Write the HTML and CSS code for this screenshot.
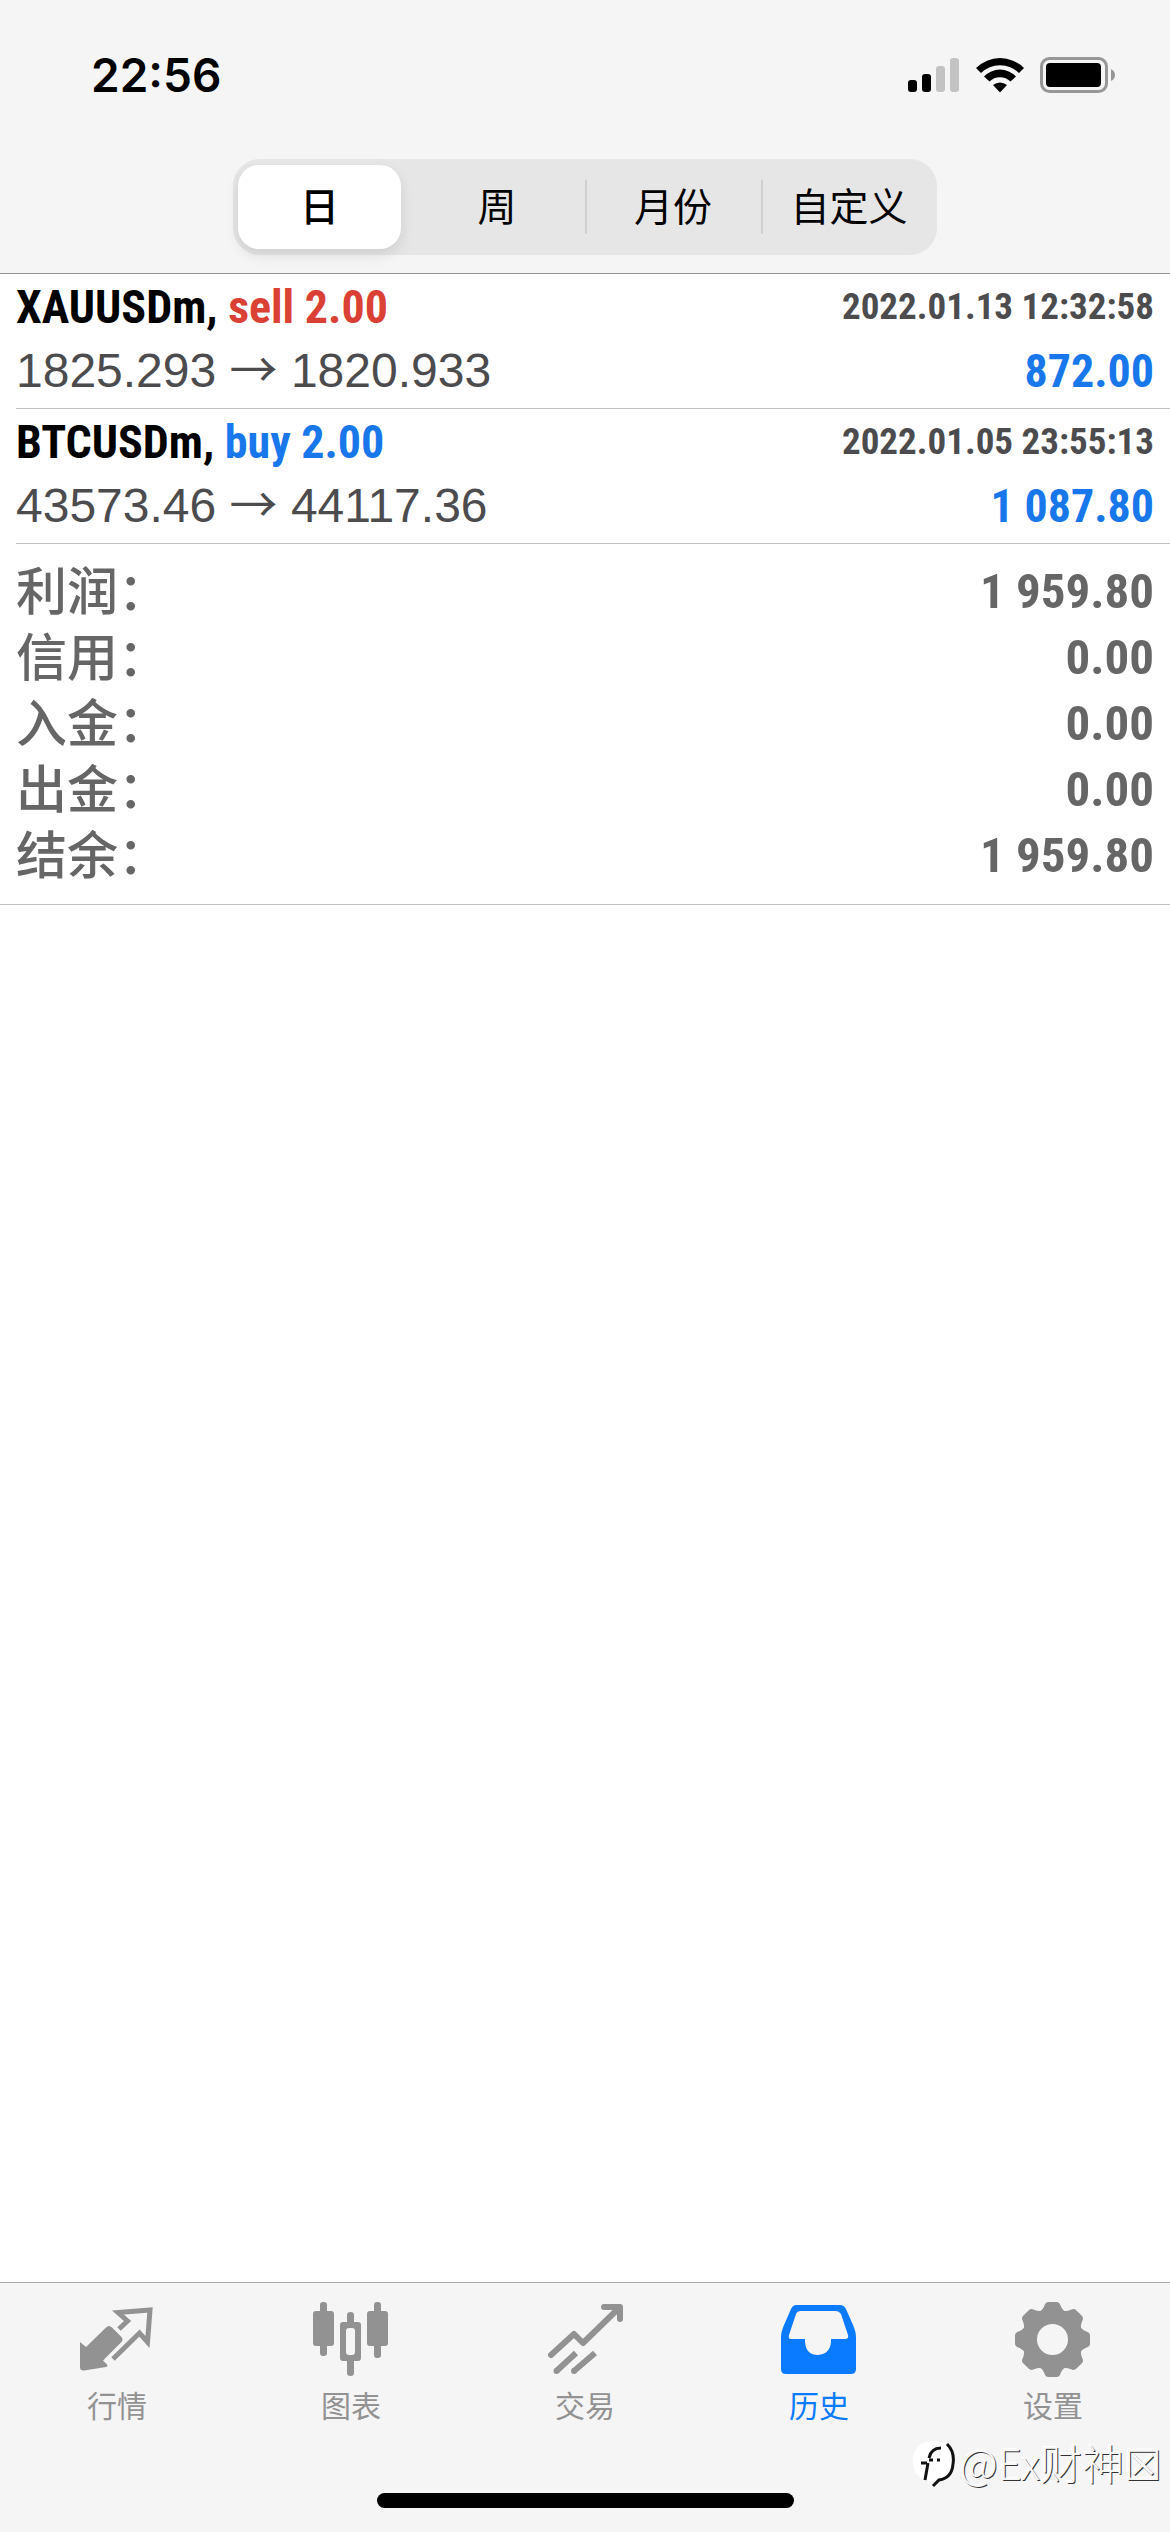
FILE: index.html
```html
<!DOCTYPE html>
<html lang="zh-CN">
<head>
  <meta charset="UTF-8">
  <meta name="viewport" content="width=device-width, initial-scale=1.0">
  <title>历史</title>
  <link rel="stylesheet" href="styles.css">
</head>
<body>
  <header class="header">
    <div class="status-bar">
      <span class="clock">22:56</span>
      <div class="status-icons">
        <svg class="icon-signal" width="52" height="36" viewBox="0 0 52 36">
          <rect x="0" y="23" width="9" height="12" rx="3"/>
          <rect x="14" y="17" width="9" height="18" rx="3"/>
          <rect class="faint" x="28" y="9" width="9" height="26" rx="3"/>
          <rect class="faint" x="42" y="1" width="9" height="34" rx="3"/>
        </svg>
        <svg class="icon-wifi" width="50" height="38" viewBox="0 0 50 38">
          <path d="M1 12 A34 34 0 0 1 49 12 L44 17 A27 27 0 0 0 6 17 Z"/>
          <path d="M9 20.500 A22 22 0 0 1 41 20.500 L35.500 25.500 A15 15 0 0 0 14.500 25.500 Z"/>
          <path d="M18 29 A11 11 0 0 1 32 29 L25 36.500 Z"/>
        </svg>
        <svg class="icon-battery" width="76" height="36" viewBox="0 0 76 36">
          <rect class="shell" x="1.500" y="1.500" width="65" height="33" rx="8"/>
          <rect x="6" y="6" width="55" height="24" rx="4"/>
          <path class="cap" d="M71 12 Q75 14 75 18 Q75 22 71 24 Z"/>
        </svg>
      </div>
    </div>
    <div class="segments">
      <button class="segment active" type="button">日</button>
      <button class="segment" type="button">周</button>
      <button class="segment divided" type="button">月份</button>
      <button class="segment divided" type="button">自定义</button>
    </div>
  </header>

  <main class="history">
    <ul class="deals">
      <li class="deal">
        <div class="deal-line">
          <span class="symbol">XAUUSDm, <span class="sell">sell 2.00</span></span>
          <time class="date">2022.01.13 12:32:58</time>
        </div>
        <div class="deal-line">
          <span class="prices">1825.293 <span class="arrow">→</span> 1820.933</span>
          <span class="profit">872.00</span>
        </div>
      </li>
      <li class="deal">
        <div class="deal-line">
          <span class="symbol">BTCUSDm, <span class="buy">buy 2.00</span></span>
          <time class="date">2022.01.05 23:55:13</time>
        </div>
        <div class="deal-line">
          <span class="prices">43573.46 <span class="arrow">→</span> 44117.36</span>
          <span class="profit">1 087.80</span>
        </div>
      </li>
    </ul>

    <dl class="summary">
      <div class="summary-row"><dt>利润：</dt><dd>1 959.80</dd></div>
      <div class="summary-row"><dt>信用：</dt><dd>0.00</dd></div>
      <div class="summary-row"><dt>入金：</dt><dd>0.00</dd></div>
      <div class="summary-row"><dt>出金：</dt><dd>0.00</dd></div>
      <div class="summary-row"><dt>结余：</dt><dd>1 959.80</dd></div>
    </dl>
  </main>

  <footer class="footer">
    <nav class="tabs">
      <a class="tab" href="#quotes">
        <svg class="tab-icon" width="80" height="80" viewBox="0 0 80 80">
          <path d="M3 41 L9 46 L29 26.500 Q32 23.500 35 26.500 L44.500 36 Q46.500 38.500 44.500 41 L26 59.500 L30 63.500 Q31 65.500 29 66 L7 69.500 Q3 70 3 66 Z"/>
          <path class="outline" d="M42 28 L50.500 20 L41 11.500 L73 9 L70.500 41 L62.500 32 L36 58"/>
        </svg>
        <span>行情</span>
      </a>
      <a class="tab" href="#charts">
        <svg class="tab-icon" width="80" height="80" viewBox="0 0 80 80">
          <rect x="2" y="10" width="21" height="35" rx="3"/>
          <rect x="9" y="1" width="7" height="54" rx="3"/>
          <rect x="56" y="10" width="21" height="35" rx="3"/>
          <rect x="63" y="1" width="7" height="56" rx="3"/>
          <path fill-rule="evenodd" d="M36 21 V14 Q36 11 39.500 11 Q43 11 43 14 V21 H47 Q50 21 50 24 V57 Q50 60 47 60 H43 V72 Q43 75 39.500 75 Q36 75 36 72 V60 H32 Q29 60 29 57 V24 Q29 21 32 21 Z M38 27 Q35 27 35 30 V51 Q35 54 38 54 H41 Q44 54 44 51 V30 Q44 27 41 27 Z"/>
        </svg>
        <span>图表</span>
      </a>
      <a class="tab" href="#trade">
        <svg class="tab-icon" width="80" height="80" viewBox="0 0 80 80">
          <path class="trend" d="M6 54 L29 33 L38 42 L73 8 M59 6 H75 V18"/>
          <path class="trend cut" d="M11.500 70 L31 52 M29 70 L50 52"/>
          <circle cx="11.500" cy="70" r="3"/>
          <circle cx="29" cy="70" r="3"/>
        </svg>
        <span>交易</span>
      </a>
      <a class="tab active" href="#history">
        <svg class="tab-icon" width="80" height="80" viewBox="0 0 80 80">
          <path fill-rule="evenodd" d="M17 4 H61 Q65 4 67 8 L74 24 Q77 31 77 36 V68 Q77 73 72 73 H7 Q2 73 2 68 V36 Q2 31 5 24 L12 8 Q14 4 17 4 Z M22 10 Q18 10 17 13 L10 34 Q9 38 12 38 H26 V41 Q27 54 39 54 Q51 53 52 41 V38 H66 Q70 38 69 34 L62 13 Q60 10 57 10 Z"/>
        </svg>
        <span>历史</span>
      </a>
      <a class="tab" href="#settings">
        <svg class="tab-icon" width="80" height="80" viewBox="0 0 80 80">
          <g transform="translate(39.500 38.500)">
            <path id="tooth" d="M-14 -27 Q-10 -29 -8 -34 Q-7 -37.500 -4 -37.500 H4 Q7 -37.500 8 -34 Q10 -29 14 -27 Z"/>
            <use href="#tooth" transform="rotate(45)"/>
            <use href="#tooth" transform="rotate(90)"/>
            <use href="#tooth" transform="rotate(135)"/>
            <use href="#tooth" transform="rotate(180)"/>
            <use href="#tooth" transform="rotate(225)"/>
            <use href="#tooth" transform="rotate(270)"/>
            <use href="#tooth" transform="rotate(315)"/>
            <circle class="ring" r="23"/>
          </g>
        </svg>
        <span>设置</span>
      </a>
    </nav>
    <div class="home-indicator"></div>
    <div class="watermark">
      <svg width="44" height="48" viewBox="0 0 44 48">
        <path class="blob" d="M21 1 Q41 1 41 21 Q41 37 24 42 Q1 41 1 21 Q1 2 21 1 Z"/>
        <path class="mark" d="M13 40 L16 23 M9 23 H15 M17 18 Q19 8 29 8 M17 20 H21 M25 20 H28"/>
        <path class="mark" d="M35 4 Q43 12 41 24 Q40 38 27 40 L21 46"/>
      </svg>
      <span>@Ex财神<span class="mark-end">☒</span></span>
    </div>
  </footer>
</body>
</html>
```
FILE: styles.css
```css
* {
  box-sizing: border-box;
}

body {
  margin: 0;
  min-height: 100vh;
  display: flex;
  flex-direction: column;
  background-color: #fff;
  color: #000;
  font-family: "Liberation Sans", "Noto Sans CJK SC", sans-serif;
}

/* header */

.header {
  background-color: #f5f5f5;
  border-bottom: 1px solid #949496;
  padding-bottom: 18px;
}

.status-bar {
  display: flex;
  justify-content: space-between;
  align-items: center;
  height: 150px;
  padding: 0 54px 0 91px;
}

.clock {
  font-family: Inter, sans-serif;
  font-size: 46px;
  font-weight: 600;
}

.status-icons {
  display: flex;
  align-items: center;
  gap: 15px;
}

.faint {
  fill: #c3c3c3;
}

.shell {
  fill: none;
  stroke: #979797;
  stroke-width: 3;
}

.cap {
  fill: #979797;
}

.segments {
  display: grid;
  grid-template-columns: repeat(4, 1fr);
  width: 704px;
  max-width: 100%;
  height: 96px;
  margin: 9px auto 0;
  border-radius: 27px;
  background-color: #e6e6e7;
}

.segment {
  margin: 6px 0;
  padding: 0 0 6px;
  border: 0;
  background: none;
  color: #000;
  font-family: "Noto Sans CJK SC", sans-serif;
  font-size: 39px;
  line-height: 56px;
}

.segment.active {
  margin: 6px 8px 6px 5px;
  border-radius: 21px;
  background-color: #fff;
  box-shadow: 0 6px 14px rgba(0, 0, 0, 0.1);
  font-weight: 500;
}

.segment.divided {
  background: linear-gradient(#cfcfd1, #cfcfd1) left center / 2px 54px no-repeat;
}

/* deals */

.history {
  flex: 1;
}

.deals {
  margin: 0;
  padding: 0 0 0 16px;
  list-style: none;
}

.deal {
  padding: 1px 16px 5px 0;
  border-bottom: 1px solid #c0c0c2;
}

.deal-line {
  display: flex;
  justify-content: space-between;
  align-items: center;
  height: 64px;
  line-height: 64px;
}

.symbol,
.date,
.profit,
.summary dd {
  font-family: "Roboto Condensed", Roboto, sans-serif;
  font-weight: 700;
}

.symbol,
.profit {
  font-size: 46px;
}

.date {
  color: #4c4c4e;
  font-size: 37px;
}

.prices {
  color: #4c4c4e;
  font-size: 48px;
}

.arrow {
  font-family: "Noto Sans CJK SC", sans-serif;
  line-height: 1;
}

.sell {
  color: #db4035;
}

.buy,
.profit {
  color: #1877eb;
}

/* summary */

.summary {
  margin: 0;
  padding: 15px 16px;
  border-bottom: 1px solid #c0c0c2;
  color: #666;
}

.summary-row {
  display: flex;
  justify-content: space-between;
  height: 66px;
}

.summary dt {
  font-family: "Noto Sans CJK SC", sans-serif;
  font-size: 51px;
  font-weight: 500;
  line-height: 58px;
}

.summary dd {
  margin: 0;
  font-size: 49px;
  line-height: 66px;
}

/* footer */

.footer {
  position: relative;
  background-color: #f5f5f5;
  border-top: 1px solid #a9a9ab;
}

.tabs {
  display: grid;
  grid-template-columns: repeat(5, 1fr);
  padding-top: 18px;
}

.tab {
  display: flex;
  flex-direction: column;
  align-items: center;
  color: #929292;
  font-family: "Noto Sans CJK SC", sans-serif;
  font-size: 30px;
  line-height: 46px;
  text-decoration: none;
}

.tab.active {
  color: #0a7aff;
}

.tab-icon {
  fill: currentColor;
}

.outline {
  fill: none;
  stroke: currentColor;
  stroke-width: 5;
}

.trend {
  fill: none;
  stroke: currentColor;
  stroke-width: 6;
  stroke-linecap: round;
  stroke-linejoin: round;
}

.trend.cut {
  stroke-linecap: butt;
}

.ring {
  fill: none;
  stroke: currentColor;
  stroke-width: 15;
}

.home-indicator {
  width: 417px;
  height: 15px;
  margin: 66px auto 24px;
  border-radius: 8px;
  background-color: #000;
}

.watermark {
  position: absolute;
  right: 8px;
  bottom: 38px;
  display: flex;
  align-items: center;
  gap: 4px;
  color: #f8f8f8;
  font-family: "Noto Sans CJK SC", sans-serif;
  font-size: 42px;
  font-weight: 300;
  line-height: 56px;
  text-shadow: 1px 1px 0 #333, -1px -1px 0 #fff;
}

.mark-end {
  font-family: "DejaVu Sans", sans-serif;
}

.blob {
  fill: #fff;
}

.mark {
  fill: none;
  stroke: #111;
  stroke-width: 3;
}
```
